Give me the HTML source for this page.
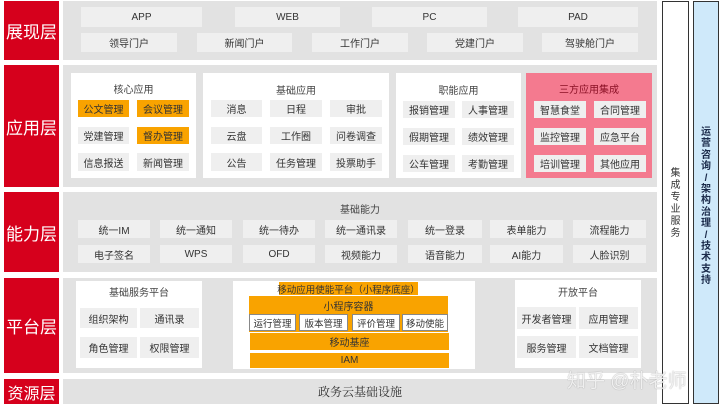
<!DOCTYPE html>
<html><head><meta charset="utf-8"><style>
*{margin:0;padding:0;box-sizing:border-box}
body{width:720px;height:409px;background:#fff;position:relative;overflow:hidden;font-family:"Liberation Sans","Noto Sans CJK SC",sans-serif;color:#333}
div{position:absolute}
.r{background:#d6001c;color:#fff;font-size:17px;display:flex;align-items:center;justify-content:center;left:4px;width:55px}
.g{background:#e2e2e2;left:63px;width:594px}
.w{background:#fff}
.b{background:#efefef;font-size:10px;display:flex;align-items:center;justify-content:center;color:#333;white-space:nowrap}
.t{font-size:10px;text-align:center;color:#444}
.o{background:#f9a300;font-size:10px;display:flex;align-items:center;justify-content:center;color:#333;white-space:nowrap}
.ib{background:#fff;border:1px solid #888;font-size:9.5px;display:flex;align-items:center;justify-content:center;top:314px;height:17px;white-space:nowrap}
</style></head><body>
<div class="r" style="top:1px;height:59px">展现层</div>
<div class="r" style="top:65px;height:122px">应用层</div>
<div class="r" style="top:192px;height:80px">能力层</div>
<div class="r" style="top:278px;height:95px">平台层</div>
<div class="r" style="top:379px;height:25px;font-size:16px">资源层</div>

<div class="g" style="top:1px;height:59px"></div>
<div class="b" style="left:81px;top:7px;width:121px;height:20px">APP</div>
<div class="b" style="left:235px;top:7px;width:105px;height:20px">WEB</div>
<div class="b" style="left:372px;top:7px;width:115px;height:20px">PC</div>
<div class="b" style="left:518px;top:7px;width:120px;height:20px">PAD</div>
<div class="b" style="left:81px;top:33px;width:96px;height:19px">领导门户</div>
<div class="b" style="left:197px;top:33px;width:95px;height:19px">新闻门户</div>
<div class="b" style="left:312px;top:33px;width:96px;height:19px">工作门户</div>
<div class="b" style="left:427px;top:33px;width:96px;height:19px">党建门户</div>
<div class="b" style="left:542px;top:33px;width:96px;height:19px">驾驶舱门户</div>

<div class="g" style="top:65px;height:122px"></div>
<div class="w" style="left:71px;top:73px;width:125px;height:105px"></div>
<div class="t" style="left:71px;top:81px;width:125px">核心应用</div>
<div class="o" style="left:78px;top:100px;width:51px;height:17px">公文管理</div>
<div class="o" style="left:137px;top:100px;width:52px;height:17px">会议管理</div>
<div class="b" style="left:78px;top:127px;width:51px;height:17px">党建管理</div>
<div class="o" style="left:137px;top:127px;width:52px;height:17px">督办管理</div>
<div class="b" style="left:78px;top:153px;width:51px;height:18px">信息报送</div>
<div class="b" style="left:137px;top:153px;width:52px;height:18px">新闻管理</div>

<div class="w" style="left:203px;top:73px;width:186px;height:105px"></div>
<div class="t" style="left:203px;top:82px;width:186px">基础应用</div>
<div class="b" style="left:211px;top:100px;width:51px;height:17px">消息</div>
<div class="b" style="left:270px;top:100px;width:52px;height:17px">日程</div>
<div class="b" style="left:330px;top:100px;width:52px;height:17px">审批</div>
<div class="b" style="left:211px;top:127px;width:51px;height:17px">云盘</div>
<div class="b" style="left:270px;top:127px;width:52px;height:17px">工作圈</div>
<div class="b" style="left:330px;top:127px;width:52px;height:17px">问卷调查</div>
<div class="b" style="left:211px;top:153px;width:51px;height:18px">公告</div>
<div class="b" style="left:270px;top:153px;width:52px;height:18px">任务管理</div>
<div class="b" style="left:330px;top:153px;width:52px;height:18px">投票助手</div>

<div class="w" style="left:396px;top:73px;width:125px;height:105px"></div>
<div class="t" style="left:396px;top:82px;width:125px">职能应用</div>
<div class="b" style="left:403px;top:101px;width:52px;height:17px">报销管理</div>
<div class="b" style="left:462px;top:101px;width:52px;height:17px">人事管理</div>
<div class="b" style="left:403px;top:128px;width:52px;height:17px">假期管理</div>
<div class="b" style="left:462px;top:128px;width:52px;height:17px">绩效管理</div>
<div class="b" style="left:403px;top:155px;width:52px;height:17px">公车管理</div>
<div class="b" style="left:462px;top:155px;width:52px;height:17px">考勤管理</div>

<div style="left:526px;top:73px;width:126px;height:105px;background:#f47a8f"></div>
<div class="t" style="left:526px;top:81px;width:126px;color:#8a1025">三方应用集成</div>
<div class="b" style="left:534px;top:101px;width:52px;height:17px">智慧食堂</div>
<div class="b" style="left:594px;top:101px;width:52px;height:17px">合同管理</div>
<div class="b" style="left:534px;top:128px;width:52px;height:17px">监控管理</div>
<div class="b" style="left:594px;top:128px;width:52px;height:17px">应急平台</div>
<div class="b" style="left:534px;top:155px;width:52px;height:17px">培训管理</div>
<div class="b" style="left:594px;top:155px;width:52px;height:17px">其他应用</div>

<div class="g" style="top:192px;height:80px"></div>
<div class="t" style="left:63px;top:201px;width:594px">基础能力</div>
<div class="b" style="left:78px;top:220px;width:72px;height:18px">统一IM</div>
<div class="b" style="left:160px;top:220px;width:72px;height:18px">统一通知</div>
<div class="b" style="left:243px;top:220px;width:72px;height:18px">统一待办</div>
<div class="b" style="left:325px;top:220px;width:72px;height:18px">统一通讯录</div>
<div class="b" style="left:408px;top:220px;width:74px;height:18px">统一登录</div>
<div class="b" style="left:490px;top:220px;width:73px;height:18px">表单能力</div>
<div class="b" style="left:573px;top:220px;width:73px;height:18px">流程能力</div>
<div class="b" style="left:78px;top:245px;width:72px;height:18px">电子签名</div>
<div class="b" style="left:160px;top:245px;width:72px;height:18px">WPS</div>
<div class="b" style="left:243px;top:245px;width:72px;height:18px">OFD</div>
<div class="b" style="left:325px;top:245px;width:72px;height:18px">视频能力</div>
<div class="b" style="left:408px;top:245px;width:74px;height:18px">语音能力</div>
<div class="b" style="left:490px;top:245px;width:73px;height:18px">AI能力</div>
<div class="b" style="left:573px;top:245px;width:73px;height:18px">人脸识别</div>

<div class="g" style="top:278px;height:95px"></div>
<div class="w" style="left:76px;top:281px;width:126px;height:87px"></div>
<div class="t" style="left:76px;top:284px;width:126px">基础服务平台</div>
<div class="b" style="left:80px;top:308px;width:57px;height:20px">组织架构</div>
<div class="b" style="left:140px;top:308px;width:59px;height:20px">通讯录</div>
<div class="b" style="left:80px;top:337px;width:57px;height:21px">角色管理</div>
<div class="b" style="left:140px;top:337px;width:59px;height:21px">权限管理</div>

<div class="w" style="left:233px;top:281px;width:242px;height:88px"></div>
<div class="o" style="left:279px;top:282px;width:139px;height:13px;font-size:9.5px">移动应用使能平台（小程序底座）</div>
<div class="o" style="left:249px;top:296px;width:199px;height:36px;align-items:flex-start;padding-top:2px">小程序容器</div>
<div class="ib" style="left:249px;width:47px">运行管理</div>
<div class="ib" style="left:299px;width:49px">版本管理</div>
<div class="ib" style="left:352px;width:48px">评价管理</div>
<div class="ib" style="left:402px;width:46px">移动使能</div>
<div class="o" style="left:250px;top:333px;width:199px;height:17px">移动基座</div>
<div class="o" style="left:250px;top:353px;width:199px;height:15px">IAM</div>

<div class="w" style="left:515px;top:280px;width:126px;height:88px"></div>
<div class="t" style="left:515px;top:284px;width:126px">开放平台</div>
<div class="b" style="left:517px;top:307px;width:59px;height:22px">开发者管理</div>
<div class="b" style="left:579px;top:307px;width:59px;height:22px">应用管理</div>
<div class="b" style="left:517px;top:336px;width:59px;height:22px">服务管理</div>
<div class="b" style="left:579px;top:336px;width:59px;height:22px">文档管理</div>

<div class="g" style="top:379px;height:25px;display:flex;align-items:center;justify-content:center;font-family:'Liberation Serif','Noto Serif CJK SC',serif;font-size:12px;color:#333">政务云基础设施</div>

<div style="left:662px;top:1px;width:27px;height:403px;border:1px solid #333;background:#fff"></div>
<div style="left:668px;top:168px;width:15px;font-size:10px;line-height:12px;text-align:center;color:#333">集成专业服务</div>
<div style="left:693px;top:1px;width:26px;height:403px;border:1px solid #333;background:#cfe9fa"></div>
<div style="left:698px;top:127px;width:16px;font-size:10px;line-height:11.4px;text-align:center;font-weight:bold;color:#1a2a4a">运<br>营<br>咨<br>询<br>/<br>架<br>构<br>治<br>理<br>/<br>技<br>术<br>支<br>持</div>

<div style="left:567px;top:366px;font-size:19px;color:rgba(255,255,255,0.85);text-shadow:0 0 1px #888;white-space:nowrap">知乎 @朴老师</div>
</body></html>
